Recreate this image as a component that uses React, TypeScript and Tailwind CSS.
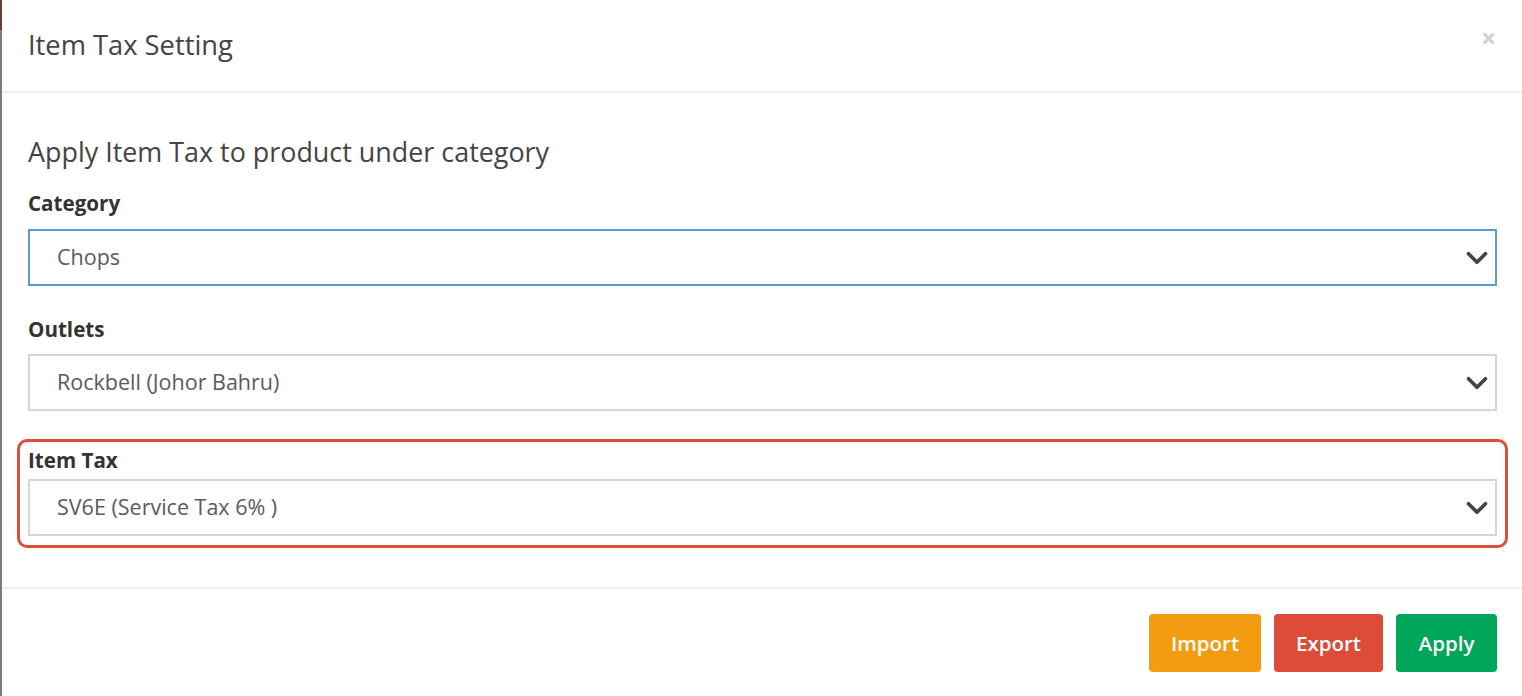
import { ChevronDown } from 'lucide-react';

const font = { fontFamily: '"Open Sans", "Liberation Sans", sans-serif' };

function Select({ value, focused }: { value: string; focused?: boolean }) {
  return (
    <div
      className={`flex h-[57px] items-center justify-between border-[2px] pl-[27px] pr-[1px] text-[21.5px] text-[#5a5a5a] ${
        focused ? 'border-[#5b9bd1]' : 'border-[#d2d6de]'
      }`}
    >
      <span>{value}</span>
      <ChevronDown className="h-[34px] w-[34px] text-[#444]" strokeWidth={2.6} />
    </div>
  );
}

export default function App() {
  return (
    <div className="flex h-[696px] w-[1522px] bg-white" style={font}>
      <div className="flex w-[2px] flex-col">
        <div className="h-[30px] bg-[#6e3b36]" />
        <div className="flex-1 bg-[#7d7d7d]" />
      </div>
      <div className="flex flex-1 flex-col">
        {/* Header */}
        <div className="flex h-[93px] items-center justify-between border-b-[2px] border-[#f0f0f0] pl-[26px] pr-[26px]">
          <h1 className="text-[27.3px] text-[#444]">Item Tax Setting</h1>
          <span className="mb-[16px] text-[26px] font-bold leading-none text-[#cfcfcf]">×</span>
        </div>

        {/* Body */}
        <div className="flex flex-col pl-[26px] pr-[25px] pt-[40px]">
          <h2 className="text-[26.9px] leading-[38px] text-[#444]">Apply Item Tax to product under category</h2>
          <label className="mt-[18px] text-[20.6px] font-bold leading-[28px] text-[#333]">Category</label>
          <div className="mt-[12px]">
            <Select value="Chops" focused />
          </div>
          <label className="mt-[29px] text-[20.6px] font-bold leading-[28px] text-[#333]">Outlets</label>
          <div className="mt-[11px]">
            <Select value="Rockbell (Johor Bahru)" />
          </div>
          <div className="-mx-[11px] mt-[28px] rounded-[10px] border-[3px] border-[#e24c3b] px-[8px] pb-[9px]">
            <label className="block text-[20.6px] font-bold leading-[37px] text-[#333]">Item Tax</label>
            <Select value="SV6E (Service Tax 6% )" />
          </div>
        </div>

        {/* Footer */}
        <div className="mt-[39px] flex justify-end gap-[13px] border-t-[2px] border-[#f0f0f0] pr-[25px] pt-[25px]">
          <button className="h-[58px] w-[112px] rounded-[4px] bg-[#f39c12] text-[20.5px] font-semibold text-white">Import</button>
          <button className="h-[58px] w-[109px] rounded-[4px] bg-[#dd4b39] text-[20.5px] font-semibold text-white">Export</button>
          <button className="h-[58px] w-[101px] rounded-[4px] bg-[#00a65a] text-[20.5px] font-semibold text-white">Apply</button>
        </div>
      </div>
    </div>
  );
}
